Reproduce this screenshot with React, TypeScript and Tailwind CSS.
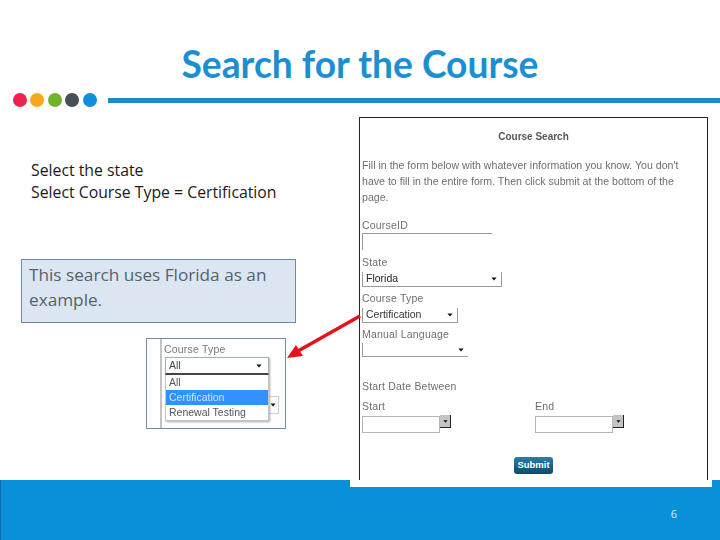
const sans = "font-['Liberation_Sans',Arial,sans-serif]";

const dots = ["bg-[#e9264f]", "bg-[#f5a81c]", "bg-[#72b32e]", "bg-[#475058]", "bg-[#0f90de]"];

function Arrow({ className }: { className: string }) {
  return (
    <svg viewBox="0 0 8 5" className={className}>
      <path d="M0.5 0.5h7L4 4.5z" fill="#111" />
    </svg>
  );
}

function Label({ children, className = "" }: { children: React.ReactNode; className?: string }) {
  return <div className={`h-[12px] text-[10.5px] leading-[12px] tracking-[0.2px] text-[#6b6f73] ${className}`}>{children}</div>;
}

function DateField() {
  return (
    <div className="flex items-start">
      <div className="mt-[1px] h-[17px] w-[78px] border border-[#b5b5b5]" />
      <div className="flex h-[13px] w-[11px] items-center justify-center border-r border-b border-[#222] bg-[#c4c4c4]">
        <Arrow className="h-[3px] w-[5px]" />
      </div>
    </div>
  );
}

function SearchForm() {
  return (
    <div className="absolute top-[110px] left-[350px] h-[377px] w-[362px] bg-white">
      <div className={`mt-[7px] ml-[9px] h-[363px] w-[349px] border-x border-t border-[#222] pl-[2px] ${sans}`}>
        <div className="blur-[0.35px]">
          <div className="pt-[13px] pr-[2px] text-center text-[10px] leading-[12px] font-bold text-[#55585b]">Course Search</div>
          <p className="mt-[14px] w-[330px] text-[10.6px] leading-[16px] text-[#6b6f73]">
            Fill in the form below with whatever information you know. You don't have to fill in the entire form. Then click submit at the bottom of the page.
          </p>
          <Label className="mt-[14px]">CourseID</Label>
          <div className="mt-[2px] h-[17px] w-[130px] border-t border-l border-[#9a9a9a]" />
          <Label className="mt-[6px]">State</Label>
          <div className="mt-[4px] flex h-[15px] w-[140px] items-center justify-between border-r border-b border-l border-[#9a9a9a] pr-[4px] pl-[3px] text-[10.5px] text-[#222]">
            Florida
            <Arrow className="h-[4px] w-[6px]" />
          </div>
          <Label className="mt-[5px]">Course Type</Label>
          <div className="mt-[4px] flex h-[15px] w-[96px] items-center justify-between border-r border-b border-l border-[#9a9a9a] pr-[4px] pl-[3px] text-[10.5px] text-[#333]">
            Certification
            <Arrow className="h-[4px] w-[6px]" />
          </div>
          <Label className="mt-[5px]">Manual Language</Label>
          <div className="mt-[3px] flex h-[14px] w-[106px] items-center justify-end border-b border-l border-[#9a9a9a] pr-[4px]">
            <Arrow className="h-[4px] w-[6px]" />
          </div>
          <Label className="mt-[23px]">Start Date Between</Label>
          <div className="mt-[8px] flex">
            <div className="w-[173px]">
              <Label>Start</Label>
              <div className="mt-[3px]">
                <DateField />
              </div>
            </div>
            <div>
              <Label>End</Label>
              <div className="mt-[3px]">
                <DateField />
              </div>
            </div>
          </div>
          <div className="mt-[24px] flex justify-center pr-[2px]">
            <div className="flex h-[17px] w-[39px] items-center justify-center rounded-[3px] bg-gradient-to-b from-[#2a7ea6] to-[#0f4a6c] text-[9.5px] font-bold text-white">
              Submit
            </div>
          </div>
        </div>
      </div>
    </div>
  );
}

function DropdownInset() {
  return (
    <div className={`relative ml-[146px] h-[91px] w-[140px] border border-[#6f8ba0] bg-white ${sans}`}>
      <div className="blur-[0.35px]">
        <div className="absolute top-0 left-[13px] h-[89px] w-[2px] bg-[#c4c4c4]" />
        <div className="pt-[4px] pl-[17px] text-[10.5px] leading-[12px] tracking-[0.2px] text-[#777]">Course Type</div>
        <div className="absolute top-[57px] left-[118px] flex h-[18px] w-[14px] items-center justify-end border border-[#ccc] pr-[2px]">
          <Arrow className="h-[4px] w-[6px]" />
        </div>
        <div className="relative mt-[2px] ml-[18px] w-[104px] shadow-[1px_1px_2px_#aaa]">
          <div className="flex h-[18px] items-center justify-between border-x border-t border-b-2 border-[#9fb2c0] border-b-[#444] pr-[6px] pl-[3px] text-[10.5px] text-[#444]">
            All
            <Arrow className="h-[4px] w-[6px]" />
          </div>
          <div className="border-x border-b border-[#c4c4c4] bg-white text-[10.5px] leading-[15px] text-[#555]">
            <div className="pl-[3px]">All</div>
            <div className="bg-[#3390ff] pl-[3px] text-[#cfe4ff]">Certification</div>
            <div className="pl-[3px]">Renewal Testing</div>
          </div>
        </div>
      </div>
    </div>
  );
}

export default function App() {
  return (
    <div className="relative flex h-[540px] w-[720px] flex-col overflow-hidden bg-white font-['Open_Sans',sans-serif]">
      <h1 className="pt-[42px] text-center font-['Lato',sans-serif] text-[37.2px] leading-[44px] font-bold text-[#1b8fd2]">Search for the Course</h1>

      <div className="mt-[7px] flex items-center">
        <div className="ml-[13px] flex gap-[3.4px]">
          {dots.map((c) => (
            <div key={c} className={`h-[14px] w-[14px] rounded-full ${c}`} />
          ))}
        </div>
        <div className="ml-[11px] h-[5px] flex-1 bg-[#1e88c8]" />
      </div>

      <div className="mt-[52px] pl-[31px] text-[15.8px] leading-[22px] text-[#1a1a1a]">
        <div>Select the state</div>
        <div>Select Course Type = Certification</div>
      </div>

      <div className="mt-[56px] ml-[21px] h-[64px] w-[275px] border border-[#6a8aa6] bg-[#dce6f2] pt-[2px] pl-[7px] text-[17.2px] leading-[25px] text-[#55626c]">
        This search uses Florida as an example.
      </div>

      <div className="mt-[15px]">
        <DropdownInset />
      </div>

      <div className="mt-auto flex h-[60px] justify-end border-l border-[#0b6fa8] bg-[#0a8fd9] pt-[26px] pr-[43px] text-[11px] leading-[16px] text-[#d8f1ff]">6</div>

      <SearchForm />

      <svg className="absolute top-[310px] left-[284px] h-[54px] w-[80px]" viewBox="0 0 80 54">
        <path d="M76 6 L14 41" stroke="#e3131b" strokeWidth="3.5" fill="none" />
        <path d="M3 48 L12 35 L19 46 Z" fill="#e3131b" />
      </svg>
    </div>
  );
}
